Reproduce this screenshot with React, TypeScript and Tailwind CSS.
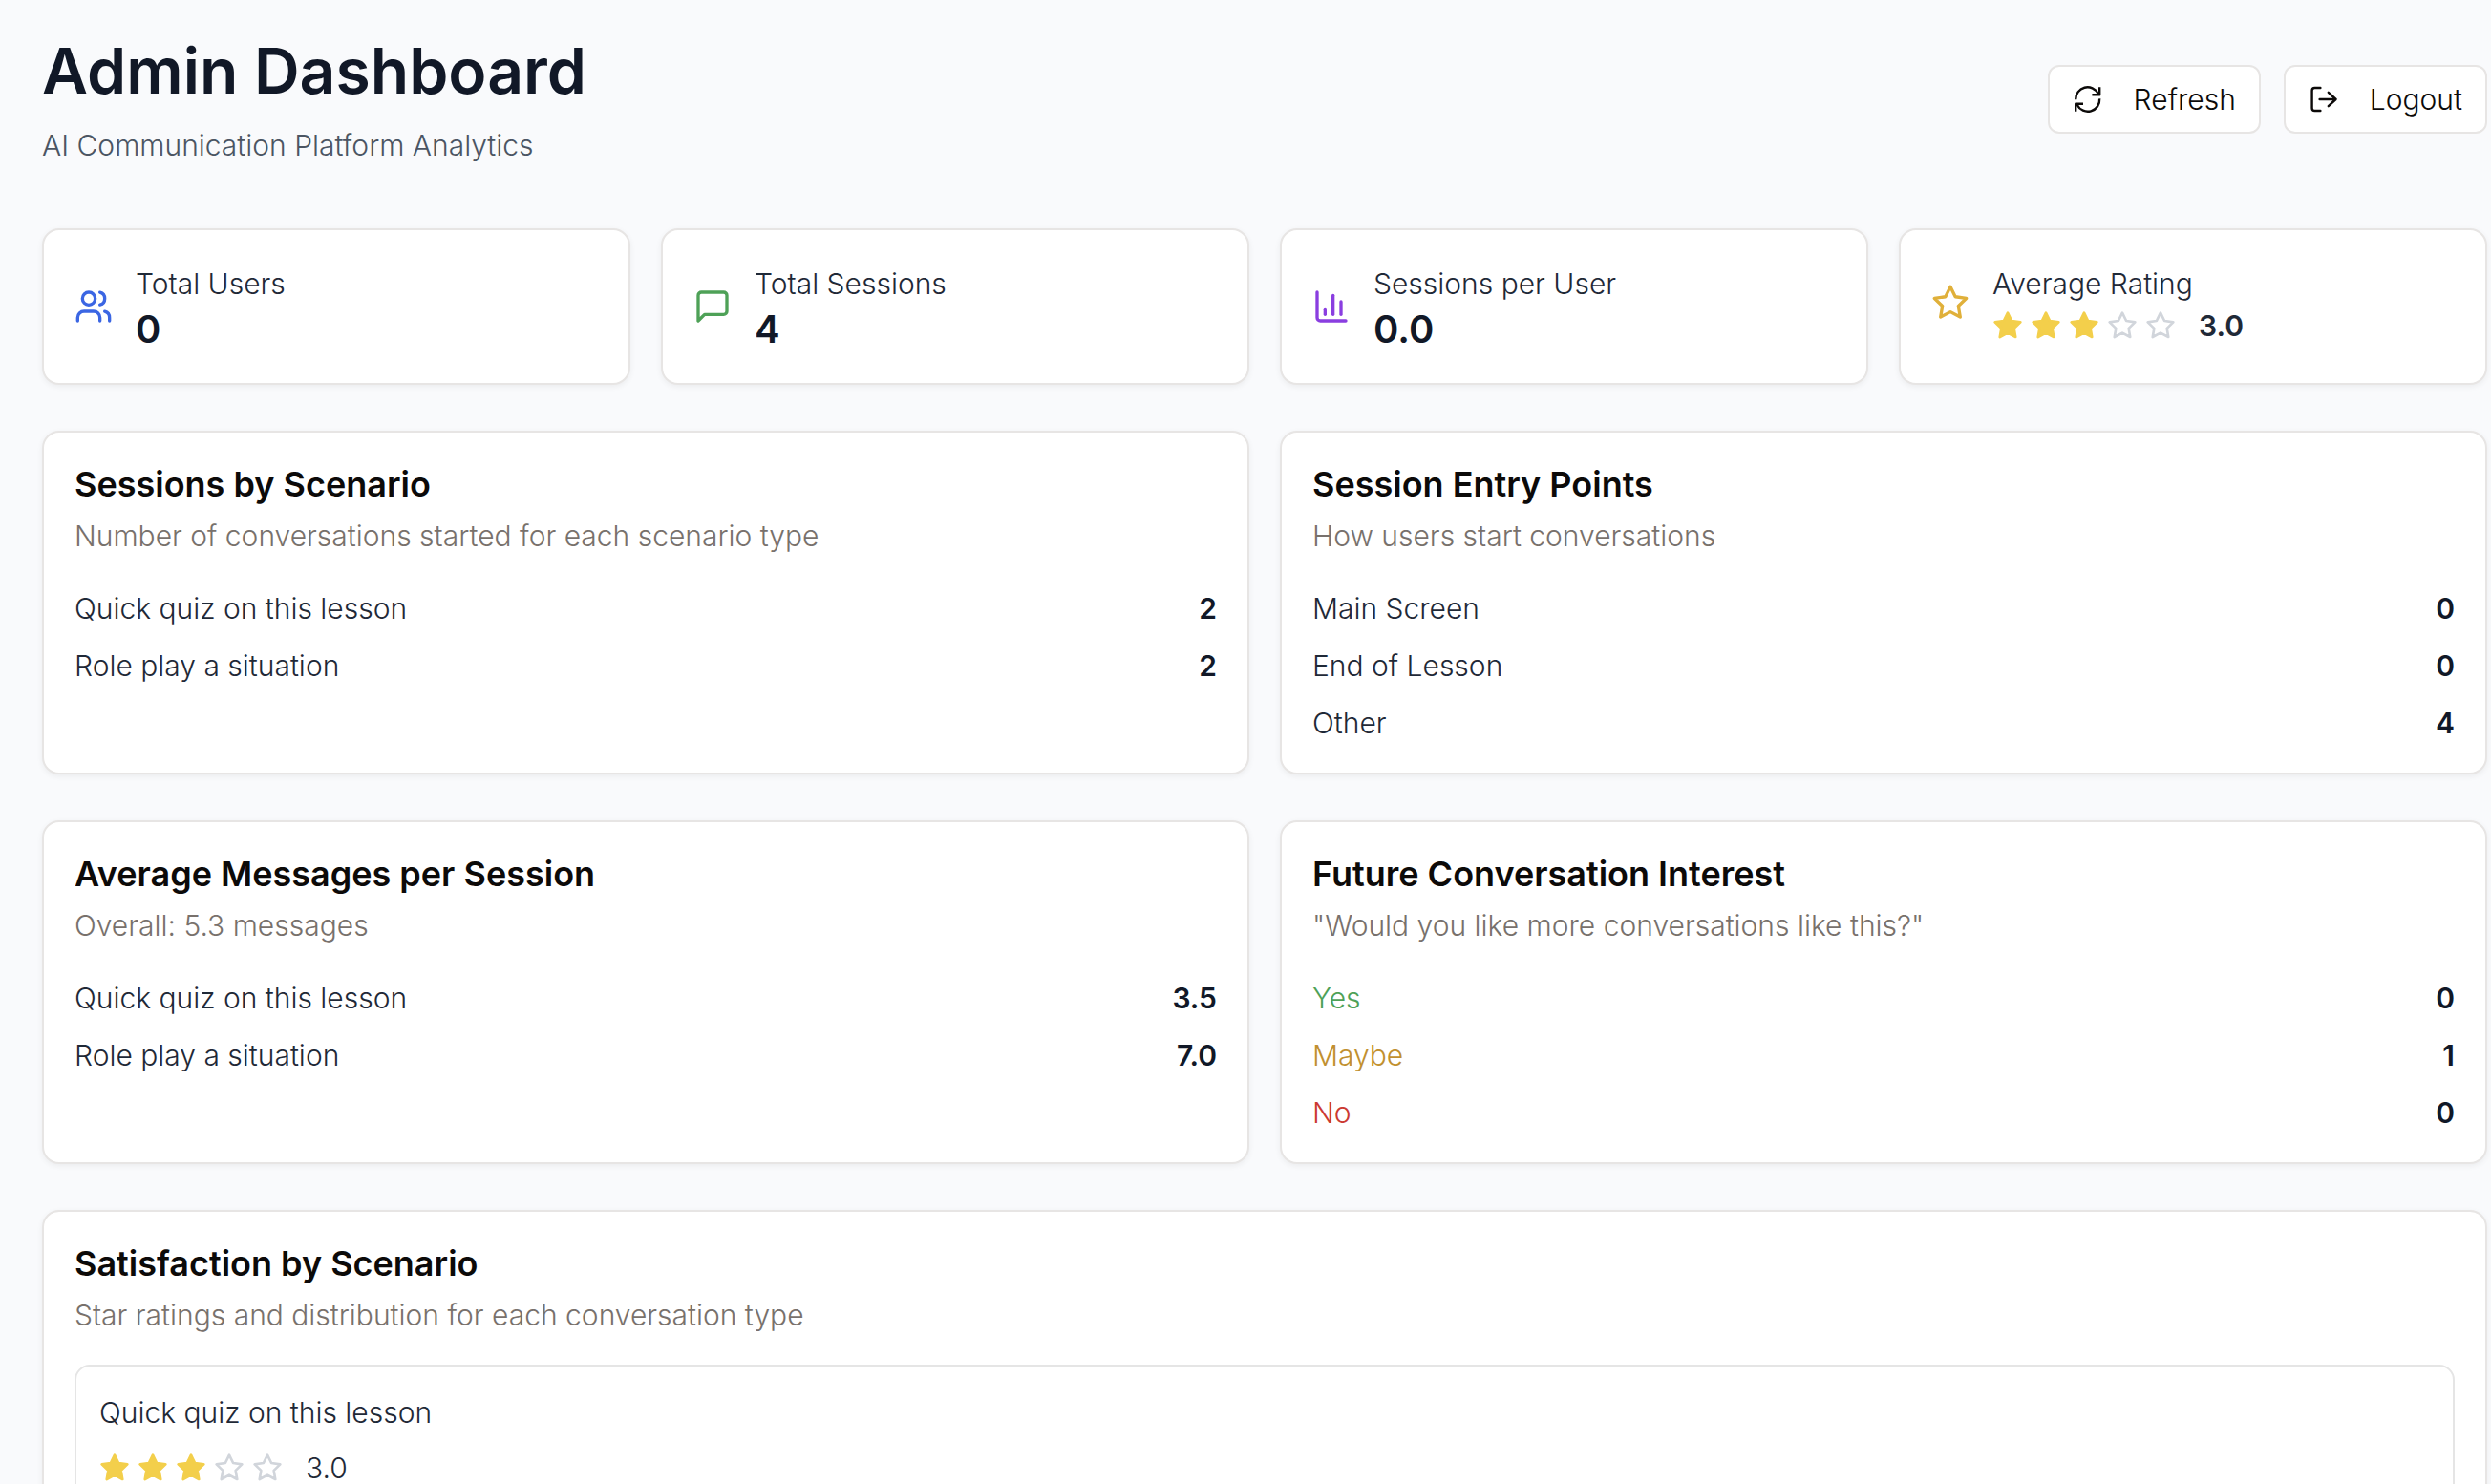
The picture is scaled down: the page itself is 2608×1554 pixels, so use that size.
import type { ReactNode } from 'react';

type IconProps = { className?: string };

function Icon({ className = '', children }: IconProps & { children: ReactNode }) {
  return (
    <svg
      viewBox="0 0 24 24"
      fill="none"
      stroke="currentColor"
      strokeWidth="2"
      strokeLinecap="round"
      strokeLinejoin="round"
      aria-hidden="true"
      className={`shrink-0 ${className}`}
    >
      {children}
    </svg>
  );
}

const STAR = '12 2 15.09 8.26 22 9.27 17 14.14 18.18 21.02 12 17.77 5.82 21.02 7 14.14 2 9.27 8.91 8.26 12 2';

function StarIcon({ className = '', filled = false }: IconProps & { filled?: boolean }) {
  return (
    <Icon className={className}>
      <polygon points={STAR} fill={filled ? 'currentColor' : 'none'} />
    </Icon>
  );
}

function UsersIcon({ className }: IconProps) {
  return (
    <Icon className={className}>
      <path d="M16 21v-2a4 4 0 0 0-4-4H6a4 4 0 0 0-4 4v2" />
      <circle cx="9" cy="7" r="4" />
      <path d="M22 21v-2a4 4 0 0 0-3-3.87" />
      <path d="M16 3.13a4 4 0 0 1 0 7.75" />
    </Icon>
  );
}

function MessageIcon({ className }: IconProps) {
  return (
    <Icon className={className}>
      <path d="M21 15a2 2 0 0 1-2 2H7l-4 4V5a2 2 0 0 1 2-2h14a2 2 0 0 1 2 2z" />
    </Icon>
  );
}

function ChartIcon({ className }: IconProps) {
  return (
    <Icon className={className}>
      <path d="M3 3v16a2 2 0 0 0 2 2h16" />
      <path d="M18 17V9" />
      <path d="M13 17V5" />
      <path d="M8 17v-3" />
    </Icon>
  );
}

function ButtonIcon({ children }: { children: ReactNode }) {
  return (
    <svg
      viewBox="0 0 32 32"
      fill="none"
      stroke="currentColor"
      strokeWidth="2.4"
      strokeLinejoin="round"
      aria-hidden="true"
      className="size-8 shrink-0"
    >
      {children}
    </svg>
  );
}

function RefreshIcon() {
  return (
    <ButtonIcon>
      <path d="M3.2 16.2A12.4 12.4 0 0 1 26.6 10L28 11.2" />
      <path d="M28.2 3.2V11.2H20.4" />
      <path d="M28.2 15.4A12.4 12.4 0 0 1 4.8 22L3.4 20.8" />
      <path d="M3.2 28.8V20.8H11" />
    </ButtonIcon>
  );
}

function LogoutIcon() {
  return (
    <ButtonIcon>
      <path d="M12.4 4H6.4A2.8 2.8 0 0 0 3.6 6.8V25.2A2.8 2.8 0 0 0 6.4 28H12.4" strokeLinecap="round" />
      <path d="M11.6 16H28.4M20.8 8.8L28.6 16L20.8 23.2" strokeLinecap="round" />
    </ButtonIcon>
  );
}

function Stars({ rating, total = 5 }: { rating: number; total?: number }) {
  return (
    <div className="flex gap-2" role="img" aria-label={`${rating} out of ${total} stars`}>
      {Array.from({ length: total }, (_, i) => (
        <StarIcon
          key={i}
          filled={i < rating}
          className={i < rating ? 'size-8 text-[#f3cf4b]' : 'size-8 text-[#d1d5db]'}
        />
      ))}
    </div>
  );
}

const CARD = 'rounded-[18px] border-2 border-[#e7e5e4] bg-white shadow-[0_2px_6px_rgba(0,0,0,0.06)]';

function StatCard({ icon, label, children }: { icon: ReactNode; label: string; children: ReactNode }) {
  return (
    <div className={`${CARD} p-8`}>
      <div className="flex items-center gap-6">
        {icon}
        <div>
          <p className="text-[30px] leading-12 text-[#1f2937]">{label}</p>
          {children}
        </div>
      </div>
    </div>
  );
}

function StatValue({ children }: { children: ReactNode }) {
  return <p className="text-[40px] leading-12 font-semibold text-[#111827]">{children}</p>;
}

type Row = { label: string; value: string; color?: string };

function Panel({ title, description, children }: { title: string; description: string; children: ReactNode }) {
  return (
    <section className={`${CARD} px-8 pt-8 pb-7`}>
      <h2 className="text-[36px] leading-11 font-semibold text-[#0c0a09]">{title}</h2>
      <p className="mt-2 text-[30px] leading-12 text-[#78716c]">{description}</p>
      {children}
    </section>
  );
}

function Rows({ rows }: { rows: Row[] }) {
  return (
    <dl className="mt-7 flex flex-col gap-3">
      {rows.map((row) => (
        <div key={row.label} className="flex items-center justify-between text-[30px] leading-12">
          <dt className={row.color ?? 'text-[#1f2937]'}>{row.label}</dt>
          <dd className="font-semibold text-[#111827]">{row.value}</dd>
        </div>
      ))}
    </dl>
  );
}

const BUTTON =
  'flex h-18 items-center gap-8 rounded-xl border-2 border-[#e7e5e4] bg-white px-6 text-[30px] text-[#0c0a09]';

export default function App() {
  return (
    <main className="h-screen overflow-hidden bg-[#f9fafc] pt-8 pr-1 pl-11 font-['Inter',sans-serif] font-light">
      <header className="flex items-center justify-between">
        <div>
          <h1 className="text-[66px] leading-21 font-semibold text-[#111827]">Admin Dashboard</h1>
          <p className="mt-3 text-[30px] leading-12 text-[#4b5563]">AI Communication Platform Analytics</p>
        </div>
        <div className="flex gap-6">
          <button type="button" className={BUTTON}>
            <RefreshIcon />
            Refresh
          </button>
          <button type="button" className={BUTTON}>
            <LogoutIcon />
            Logout
          </button>
        </div>
      </header>

      <div className="mt-[63px] grid grid-cols-4 gap-8">
        <StatCard icon={<UsersIcon className="size-10 text-[#3b66e3]" />} label="Total Users">
          <StatValue>0</StatValue>
        </StatCard>
        <StatCard icon={<MessageIcon className="size-10 text-[#4ea157]" />} label="Total Sessions">
          <StatValue>4</StatValue>
        </StatCard>
        <StatCard icon={<ChartIcon className="size-10 text-[#8a3ee0]" />} label="Sessions per User">
          <StatValue>0.0</StatValue>
        </StatCard>
        <StatCard icon={<StarIcon className="size-10 text-[#e0b03a]" />} label="Average Rating">
          <div className="flex items-center gap-6">
            <Stars rating={3} />
            <span className="text-[30px] leading-10 font-semibold text-[#1f2937]">3.0</span>
          </div>
        </StatCard>
      </div>

      <div className="mt-12 grid grid-cols-2 gap-x-8 gap-y-12">
        <Panel title="Sessions by Scenario" description="Number of conversations started for each scenario type">
          <Rows
            rows={[
              { label: 'Quick quiz on this lesson', value: '2' },
              { label: 'Role play a situation', value: '2' },
            ]}
          />
        </Panel>
        <Panel title="Session Entry Points" description="How users start conversations">
          <Rows
            rows={[
              { label: 'Main Screen', value: '0' },
              { label: 'End of Lesson', value: '0' },
              { label: 'Other', value: '4' },
            ]}
          />
        </Panel>
        <Panel title="Average Messages per Session" description="Overall: 5.3 messages">
          <Rows
            rows={[
              { label: 'Quick quiz on this lesson', value: '3.5' },
              { label: 'Role play a situation', value: '7.0' },
            ]}
          />
        </Panel>
        <Panel title="Future Conversation Interest" description={'"Would you like more conversations like this?"'}>
          <Rows
            rows={[
              { label: 'Yes', value: '0', color: 'text-[#4ea157]' },
              { label: 'Maybe', value: '1', color: 'text-[#c1902f]' },
              { label: 'No', value: '0', color: 'text-[#cb3a32]' },
            ]}
          />
        </Panel>
        <div className="col-span-2 grid">
          <Panel title="Satisfaction by Scenario" description="Star ratings and distribution for each conversation type">
            <article className="mt-7 rounded-2xl border-2 border-[#e5e5e5] p-6">
              <h3 className="text-[30px] leading-12 text-[#1f2937]">Quick quiz on this lesson</h3>
              <div className="mt-4 flex items-center gap-6 text-[30px] leading-9 text-[#1f2937]">
                <Stars rating={3} />
                3.0
              </div>
            </article>
          </Panel>
        </div>
      </div>
    </main>
  );
}
